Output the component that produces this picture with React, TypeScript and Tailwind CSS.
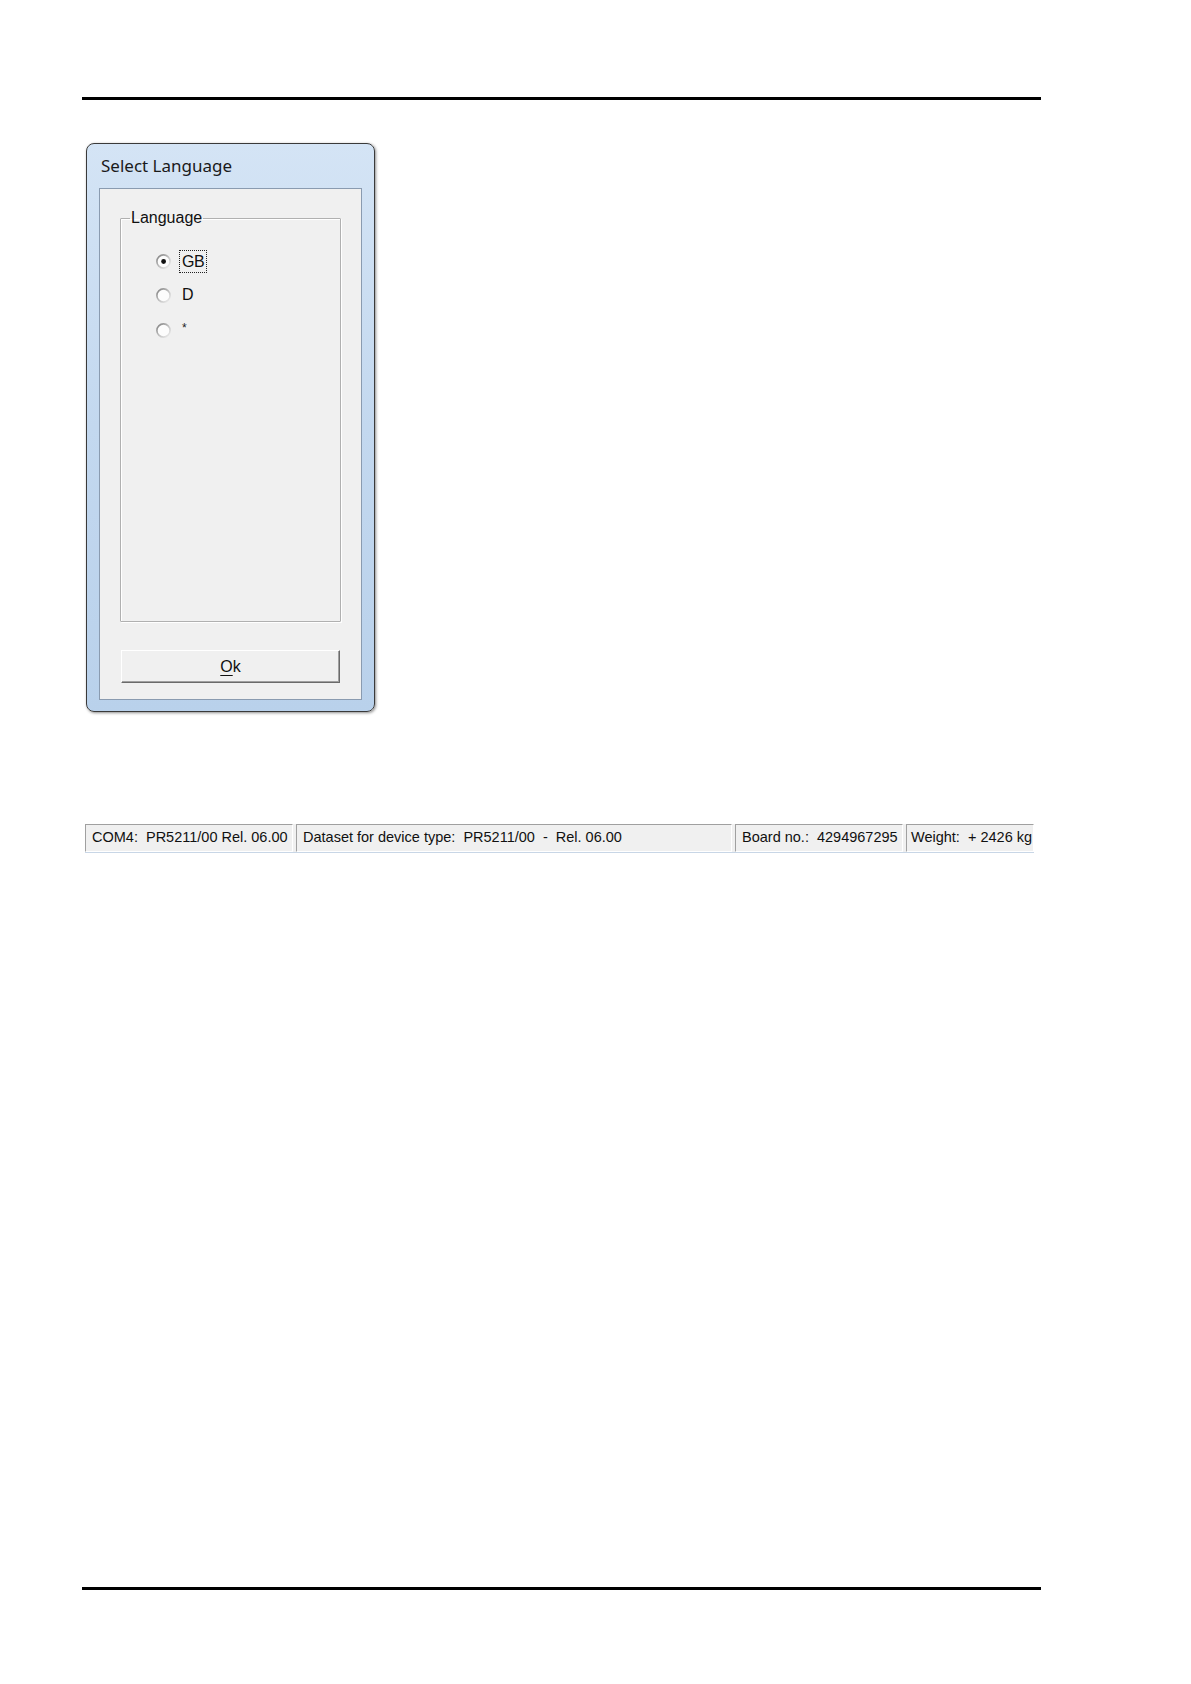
import React from 'react'

function Radio({ checked }: { checked?: boolean }) {
  return (
    <svg width="15" height="15" viewBox="0 0 15 15" className="shrink-0">
      <defs>
        <linearGradient id="rb" x1="0" y1="0" x2="1" y2="1">
          <stop offset="0" stopColor="#7e7e7e" />
          <stop offset="0.55" stopColor="#c4c4c4" />
          <stop offset="1" stopColor="#f0f0f0" />
        </linearGradient>
      </defs>
      <circle cx="7.5" cy="7.5" r="6.6" fill="#fcfcfc" stroke="url(#rb)" strokeWidth="1.6" />
      {checked && <circle cx="7.6" cy="7.5" r="2.4" fill="#111" />}
    </svg>
  )
}

const panel =
  'shrink-0 h-full flex items-center bg-[#f0f0f0] border border-t-[#a0a0a0] border-l-[#a0a0a0] border-b-white border-r-white whitespace-pre overflow-hidden text-[14.5px] text-[#111]'

export default function App() {
  return (
    <div className="w-[1191px] h-[1684px] bg-white flex flex-col pt-[97px] font-['Liberation_Sans',Arial,sans-serif]">
      <div className="ml-[82px] w-[959px] h-[3px] bg-black" />

      {/* dialog */}
      <div className="ml-[86px] mt-[43px] w-[289px] h-[569px] rounded-[8px] border border-[#3a3a3a] bg-gradient-to-b from-[#d4e4f5] via-[#c3d8ef] to-[#b9d1eb] shadow-[1px_1px_3px_rgba(0,0,0,0.45)] flex flex-col px-[12px] pb-[11px]">
        <div className="h-[44px] flex items-center pl-[2px] text-[17px] text-[#1a1a1a] font-['Noto_Sans','Open_Sans',sans-serif]">
          Select Language
        </div>
        <div className="flex-1 border border-[#8a9bb0] bg-[#f0f0f0] flex flex-col px-[20px] pt-[20px] pb-[16px]">
          {/* group box */}
          <fieldset className="h-[413px] border border-[#b0b0b0] shadow-[inset_1px_1px_0_#fff,1px_1px_0_#fff] rounded-[1px] mx-0 pl-[35px] pr-[8px] pt-0">
            <legend className="ml-[-26px] px-[1px] text-[16px] text-[#111] leading-[18px]">Language</legend>
            <div className="flex flex-col mt-[26px] gap-[18px]">
              <div className="flex items-center gap-[8px] h-[16px]">
                <Radio checked />
                <span className="border border-dotted border-[#222] px-[2px] leading-[21px] text-[16px] tracking-[-0.5px] text-[#111]">GB</span>
              </div>
              <div className="flex items-center gap-[11px] h-[16px]">
                <Radio />
                <span className="text-[16px] text-[#111]">D</span>
              </div>
              <div className="flex items-center gap-[11px] h-[16px] mt-[1px]">
                <Radio />
                <span className="text-[12px] text-[#222] -mt-[4px]">*</span>
              </div>
            </div>
          </fieldset>
          <div className="flex-1" />
          <button className="h-[33px] w-[219px] ml-[1px] bg-[#f0f0f0] border border-t-white border-l-white border-b-[#6a6a6a] border-r-[#6a6a6a] shadow-[inset_-1px_-1px_0_#a0a0a0] flex items-center justify-center text-[16px] text-[#111]">
            <span className="underline underline-offset-[3px] decoration-1">O</span>k
          </button>
        </div>
      </div>

      {/* status bar */}
      <div className="ml-[85px] mt-[112px] w-[949px] h-[29px] flex gap-[3px] border-b border-[#c8d6e6] bg-[#f0f0f0]">
        <div className={`${panel} w-[208px] pl-[6px]`}>COM4:  PR5211/00 Rel. 06.00</div>
        <div className={`${panel} w-[436px] pl-[6px]`}>Dataset for device type:  PR5211/00  -  Rel. 06.00</div>
        <div className={`${panel} w-[168px] pl-[6px]`}>Board no.:  4294967295</div>
        <div className={`${panel} w-[128px] pl-[4px]`}>Weight:  + 2426 kg</div>
      </div>

      <div className="ml-[82px] mt-[734px] w-[959px] h-[3px] bg-black" />
    </div>
  )
}
